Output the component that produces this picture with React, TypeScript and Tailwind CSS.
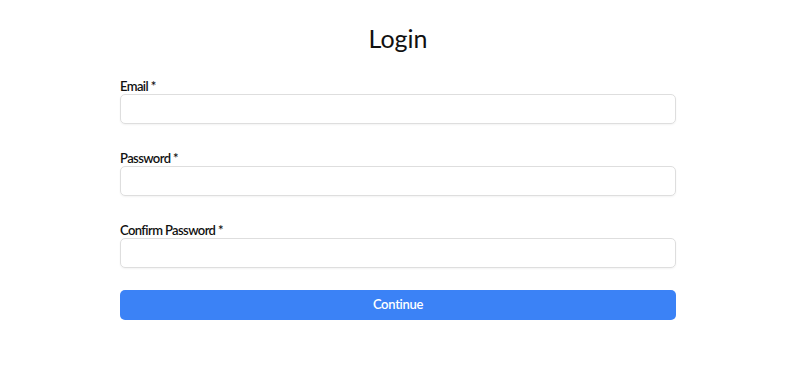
export default function App() {
  const fields = ["Email", "Password", "Confirm Password"];
  return (
    <main className="min-h-screen bg-white font-['Lato',_sans-serif] text-[#111]">
      <div className="ml-[120px] w-[556px] pt-[22px]">
        <h1 className="text-center text-[25px] leading-[32px] text-[#111]">Login</h1>
        <form className="mt-[21px] flex flex-col">
          {fields.map((label) => (
            <div key={label} className="mb-[23px] flex flex-col">
              <label className="-mb-1 text-[13px] font-semibold leading-[23px] tracking-[-0.6px]">
                {label} *
              </label>
              <input
                type={label === "Email" ? "email" : "password"}
                className="h-[30px] rounded-[5px] border border-[#dedede] px-2 text-sm shadow-[0_1px_2px_rgba(0,0,0,0.05)] outline-none"
              />
            </div>
          ))}
          <button
            type="button"
            className="-mt-px h-[30px] rounded-[5px] bg-[#3b82f6] text-[13px] font-semibold tracking-[-0.3px] text-white"
          >
            Continue
          </button>
        </form>
      </div>
    </main>
  );
}
